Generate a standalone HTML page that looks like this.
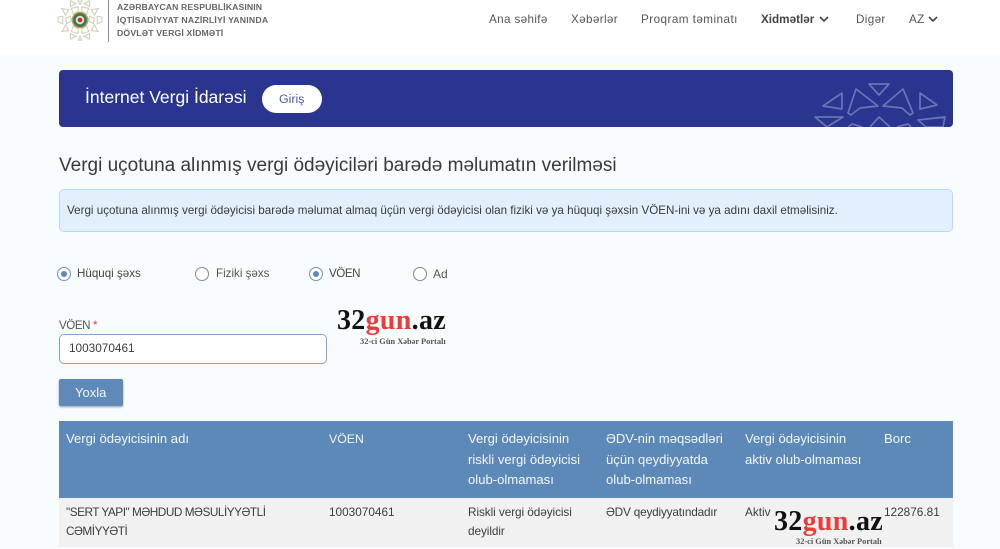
<!DOCTYPE html>
<html lang="az"><head><meta charset="utf-8"><title>Vergi</title>
<style>
html,body{margin:0;padding:0}
body{width:1000px;height:549px;position:relative;overflow:hidden;background:#f9fcff;font-family:"Liberation Sans",sans-serif;color:#3d3d3d}
.t{position:absolute;white-space:nowrap;line-height:1}
.a{position:absolute}
.radio{position:absolute;width:12px;height:12px;border:1px solid #8a8a8a;border-radius:50%;background:#fff}
.radio.on{border-color:#6f93bd}
.radio.on:after{content:"";position:absolute;left:3px;top:3px;width:6px;height:6px;border-radius:50%;background:#5d89bb}
.th{color:#f2f6fa;font-size:13.1px;line-height:20.5px;position:absolute;white-space:nowrap}
.td{color:#3d3d3d;font-size:11.8px;line-height:18.5px;position:absolute;white-space:nowrap}
.wm{position:absolute;font-family:"Liberation Serif",serif;font-weight:700;white-space:nowrap;color:#111;line-height:1}
.wm b{color:#ee3a3a}
.ws{position:absolute;font-family:"Liberation Serif",serif;font-weight:700;white-space:nowrap;color:#555;line-height:1;font-size:8.4px}
.nav{font-size:11.7px;color:#555;letter-spacing:.35px;top:14px}
.logo{font-size:8.7px;font-weight:700;color:#666;left:117px}
</style></head><body>
<div class="a" style="left:0;top:0;width:1000px;height:54px;background:#fff"></div>

<svg class="a" style="left:57px;top:-1px" width="46" height="44" viewBox="0 0 48 44" fill="none" stroke="#d2cebd" stroke-width="1.1">
<path d="M14 1l6 3-6 3zM34 1l-6 3 6 3zM22 1h4l-2 4zM5 9l7 1-3 6zM43 9l-7 1 3 6zM1 18l5-1v8l-5-2zM47 18l-5-1v8l5-2zM5 33l7-1-3-6zM43 33l-7-1 3-6zM14 41l6-3-6-3zM34 41l-6-3 6-3zM22 42h4l-2-4zM15 9l7-2v5l-5 3zM33 9l-7-2v5l5 3zM9 19l5-2 1 5-5 3zM39 19l-5-2-1 5 5 3zM15 33l7 2v-5l-5-3zM33 33l-7 2v-5l5-3z"/>
<circle cx="24" cy="21" r="8" fill="#3c7a5a" stroke="#b9a25b" stroke-width="1.5"/><circle cx="24" cy="21" r="4.4" fill="#e9e2c8" stroke="none"/><circle cx="24" cy="21" r="2.4" fill="#d3283c" stroke="none"/></svg>
<div class="a" style="left:108px;top:0;width:1px;height:42px;background:#8c8c8c"></div>
<div class="t logo" style="top:3px;letter-spacing:.1px">AZƏRBAYCAN RESPUBLİKASININ</div>
<div class="t logo" style="top:16px;letter-spacing:.2px">İQTİSADİYYAT NAZİRLİYİ YANINDA</div>
<div class="t logo" style="top:29px;letter-spacing:.15px">DÖVLƏT VERGİ XİDMƏTİ</div>

<div class="t nav" style="left:489px">Ana səhifə</div>
<div class="t nav" style="left:571px">Xəbərlər</div>
<div class="t nav" style="left:641px;letter-spacing:.45px">Proqram təminatı</div>
<div class="t" style="left:761px;top:14px;font-size:11.7px;font-weight:700;color:#444">Xidmətlər</div>
<svg class="a" style="left:819px;top:16px" width="10" height="7" fill="none" stroke="#444" stroke-width="1.6"><path d="M1 1l4 4 4-4"/></svg>
<div class="t nav" style="left:856px">Digər</div>
<div class="t nav" style="left:909px">AZ</div>
<svg class="a" style="left:928px;top:16px" width="10" height="7" fill="none" stroke="#444" stroke-width="1.6"><path d="M1 1l4 4 4-4"/></svg>

<div class="a" style="left:59px;top:70px;width:894px;height:57px;background:#29358f;border-radius:4px;overflow:hidden">
<svg class="a" style="left:741px;top:0" width="153" height="57" fill="none" stroke="#6c74b5" stroke-width="1.7" stroke-linejoin="round"><path d="M69 14h20l-10 11zM42 23v16l-19-3zM56 19l22 17-18 2-9 7-3-2zM103 19l-20 17 19 2 8 7 3-2zM120 23l17 12-17 4zM15 47h28l-16 10zM145 47l-2 10h-17l-8-7zM70 57l9-10 11 10M48 57l4-3 10 3M97 57l11-3 3 3"/></svg>
</div>
<div class="t" style="left:85px;top:89px;font-size:17.5px;color:#fff">İnternet Vergi İdarəsi</div>
<div class="a" style="left:262px;top:85px;width:60px;height:28px;background:#fff;border-radius:14px"></div>
<div class="t" style="left:279px;top:93px;font-size:12.4px;color:#4d5aa3">Giriş</div>

<div class="t" style="left:59px;top:156px;font-size:19px;color:#3a3a3a">Vergi uçotuna alınmış vergi ödəyiciləri barədə məlumatın verilməsi</div>

<div class="a" style="left:59px;top:189px;width:892px;height:41px;background:#e2f0fe;border:1px solid #b3d8fb;border-radius:5px"></div>
<div class="t" style="left:67px;top:205px;font-size:11.63px;color:#3a3a3a">Vergi uçotuna alınmış vergi ödəyicisi barədə məlumat almaq üçün vergi ödəyicisi olan fiziki və ya hüquqi şəxsin VÖEN-ini və ya adını daxil etməlisiniz.</div>

<div class="radio on" style="left:57px;top:267px"></div>
<div class="t" style="left:77px;top:268px;font-size:11.6px;color:#444">Hüquqi şəxs</div>
<div class="radio" style="left:195px;top:267px"></div>
<div class="t" style="left:216px;top:268px;font-size:11.6px;color:#555">Fiziki şəxs</div>
<div class="radio on" style="left:309px;top:267px"></div>
<div class="t" style="left:329px;top:268px;font-size:11.6px;letter-spacing:-.45px;color:#444">VÖEN</div>
<div class="radio" style="left:413px;top:267px"></div>
<div class="t" style="left:433px;top:268px;font-size:12px;color:#555">Ad</div>

<div class="t" style="left:59px;top:319px;font-size:11.6px;letter-spacing:-.45px;color:#555">VÖEN <span style="color:#d9414a;font-size:12px">*</span></div>
<div class="a" style="left:59px;top:334px;width:266px;height:28px;background:#fff;border:1px solid #7ea3cd;border-radius:5px"></div>
<div class="t" style="left:69px;top:343px;font-size:11.8px;color:#3d3d3d">1003070461</div>

<div class="a" style="left:59px;top:379px;width:64px;height:27px;background:#5f89b9;border-radius:2px;box-shadow:0 1px 2px rgba(0,0,0,.4)"></div>
<div class="t" style="left:75px;top:386px;font-size:13px;color:#f0f5fa">Yoxla</div>

<div class="wm" style="left:337px;top:307px;font-size:28px;letter-spacing:.3px">32<b>gun</b>.az</div>
<div class="ws" style="left:360px;top:338px">32-ci Gün Xəbər Portalı</div>

<div class="a" style="left:59px;top:421px;width:894px;height:77px;background:#5d89b9"></div>
<div class="a" style="left:59px;top:498px;width:894px;height:49px;background:#f1f1f1"></div>
<div class="th" style="left:66px;top:429px">Vergi ödəyicisinin adı</div>
<div class="th" style="left:329px;top:429px;font-size:12.3px">VÖEN</div>
<div class="th" style="left:468px;top:429px">Vergi ödəyicisinin<br>riskli vergi ödəyicisi<br>olub-olmaması</div>
<div class="th" style="left:606px;top:429px">ƏDV-nin məqsədləri<br>üçün qeydiyyatda<br>olub-olmaması</div>
<div class="th" style="left:745px;top:429px">Vergi ödəyicisinin<br>aktiv olub-olmaması</div>
<div class="th" style="left:884px;top:429px">Borc</div>
<div class="td" style="left:66px;top:503px;letter-spacing:-.48px">"SERT YAPI" MƏHDUD MƏSULİYYƏTLİ<br>CƏMİYYƏTİ</div>
<div class="td" style="left:329px;top:503px">1003070461</div>
<div class="td" style="left:468px;top:503px;letter-spacing:-.08px">Riskli vergi ödəyicisi<br>deyildir</div>
<div class="td" style="left:606px;top:503px;letter-spacing:-.2px">ƏDV qeydiyyatındadır</div>
<div class="td" style="left:745px;top:503px">Aktiv</div>
<div class="td" style="left:884px;top:503px">122876.81</div>
<div class="wm" style="left:774px;top:508px;font-size:28px;letter-spacing:.3px">32<b>gun</b>.az</div>
<div class="ws" style="left:796px;top:538px">32-ci Gün Xəbər Portalı</div>
</body></html>
